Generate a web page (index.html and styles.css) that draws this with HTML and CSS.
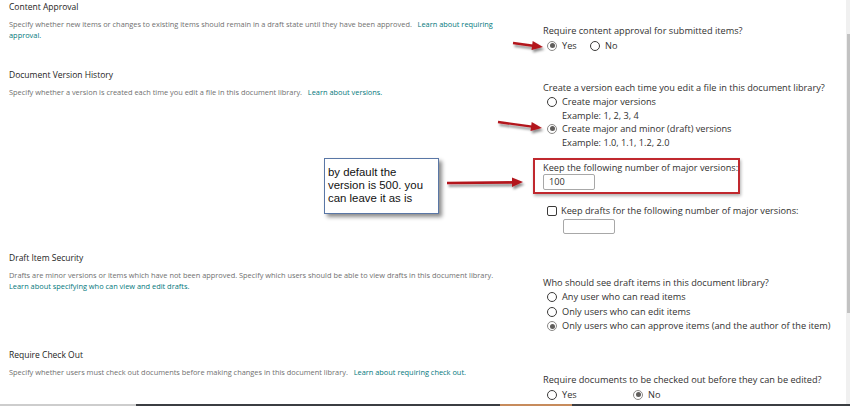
FILE: index.html
```html
<!DOCTYPE html>
<html lang="en">
<head>
<meta charset="utf-8">
<title>Versioning settings</title>
<link rel="stylesheet" href="styles.css">
</head>
<body>
<div class="window">
  <div class="viewport">
    <main class="content">
      <section class="sec sec-approval">
        <div class="info">
          <h2 class="title">Content Approval</h2>
          <p class="desc">Specify whether new items or changes to existing items should remain in a draft state until they have been approved.&nbsp;&nbsp; <a href="#"><span>Learn about requiring</span> <span>approval.</span></a></p>
        </div>
        <div class="field">
          <div class="q">Require content approval for submitted items?</div>
          <div class="opts inline">
            <div class="opt"><span class="radio on"></span>Yes</div>
            <div class="opt"><span class="radio"></span>No</div>
          </div>
        </div>
      </section>

      <section class="sec sec-versions">
        <div class="info">
          <h2 class="title">Document Version History</h2>
          <p class="desc">Specify whether a version is created each time you edit a file in this document library.&nbsp;&nbsp; <a href="#">Learn about versions.</a></p>
        </div>
        <div class="field">
          <div class="q">Create a version each time you edit a file in this document library?</div>
          <div class="opts list">
            <div class="opt"><span class="radio"></span>Create major versions</div>
            <div class="example">Example: 1, 2, 3, 4</div>
            <div class="opt"><span class="radio on"></span>Create major and minor (draft) versions</div>
            <div class="example">Example: 1.0, 1.1, 1.2, 2.0</div>
          </div>
          <div class="keep">
            <div class="keep-label">Keep the following number of major versions:</div>
            <div class="textbox">100</div>
          </div>
          <div class="check-row"><span class="checkbox"></span>Keep drafts for the following number of major versions:</div>
          <div class="textbox indent"></div>
        </div>
      </section>

      <section class="sec sec-drafts">
        <div class="info">
          <h2 class="title">Draft Item Security</h2>
          <p class="desc"><span>Drafts are minor versions or items which have not been approved. Specify which users should be able to view drafts in this document library.</span> <a href="#">Learn about specifying who can view and edit drafts.</a></p>
        </div>
        <div class="field">
          <div class="q">Who should see draft items in this document library?</div>
          <div class="opts tall">
            <div class="opt"><span class="radio"></span>Any user who can read items</div>
            <div class="opt"><span class="radio"></span>Only users who can edit items</div>
            <div class="opt"><span class="radio on"></span>Only users who can approve items (and the author of the item)</div>
          </div>
        </div>
      </section>

      <section class="sec sec-checkout">
        <div class="info">
          <h2 class="title">Require Check Out</h2>
          <p class="desc">Specify whether users must check out documents before making changes in this document library.&nbsp;&nbsp; <a href="#">Learn about requiring check out.</a></p>
        </div>
        <div class="field">
          <div class="q">Require documents to be checked out before they can be edited?</div>
          <div class="opts inline wide">
            <div class="opt"><span class="radio"></span>Yes</div>
            <div class="opt"><span class="radio on"></span>No</div>
          </div>
        </div>
      </section>

      <div class="highlight"></div>
      <div class="callout">by default the version is 500. you can leave it as is</div>

      <svg class="arrows" width="846" height="404" viewBox="0 0 846 404" xmlns="http://www.w3.org/2000/svg">
        <defs>
          <filter id="shadow" x="-20%" y="-50%" width="140%" height="250%">
            <feDropShadow dx="1.5" dy="2.5" stdDeviation="1.2" flood-color="#000" flood-opacity="0.45"/>
          </filter>
        </defs>
        <g filter="url(#shadow)" fill="#b3161e" stroke="#b3161e">
          <line x1="513" y1="43" x2="533" y2="45.7" stroke-width="2.4"/>
          <polygon points="543,47 532.7,41.1 531.5,50.0" stroke="none"/>
          <line x1="498" y1="122" x2="532" y2="126.6" stroke-width="2.4"/>
          <polygon points="542,128 531.7,122.0 530.5,130.9" stroke="none"/>
          <line x1="447" y1="183" x2="513" y2="182.4" stroke-width="2.6"/>
          <polygon points="523,182 512,177.5 512,187" stroke="none"/>
        </g>
      </svg>
    </main>
    <div class="scrollbar"><div class="thumb"></div></div>
  </div>
  <div class="taskbar">
    <div class="tb-light"></div>
    <div class="tb-dark"></div>
    <div class="tb-orange"></div>
  </div>
</div>
</body>
</html>
```
FILE: styles.css
```css
* { box-sizing: border-box; }
html, body { margin: 0; padding: 0; background: #fff; }
body {
  width: 850px;
  height: 406px;
  overflow: hidden;
  font-family: "Open Sans", "Noto Sans", sans-serif;
  color: #323130;
}
.window { display: flex; flex-direction: column; height: 406px; }
.viewport { flex: 1; display: flex; min-height: 0; }
.content { flex: 1; position: relative; overflow: hidden; }

.scrollbar { width: 4px; background: #f0f0f0; padding-top: 34px; }
.thumb { width: 3px; height: 279px; margin-left: 1px; background: #c2c2c2; }

.taskbar { height: 2px; display: flex; background: #3b3e42; }
.tb-light { width: 136px; background: #cdcdcd; }
.tb-dark { width: 364px; }
.tb-orange { width: 72px; background: #c78b5c; }

/* sections */
.sec { display: grid; grid-template-columns: 534px 1fr; padding-left: 9px; }
.sec-approval { height: 68px; }
.sec-versions { height: 183px; }
.sec-drafts { height: 97px; }
.sec-checkout { height: 56px; }

.info { max-width: 492px; }
.title { margin: 0; font-size: 8.5px; font-weight: 400; line-height: 14px; color: #252423; }
.desc { margin: 4.5px 0 0; font-size: 7.4px; line-height: 11px; color: #707070; }
.desc a { color: #03787c; text-decoration: none; }

.field { font-size: 9.2px; line-height: 14px; color: #323130; white-space: nowrap; }
.sec-approval .field { padding-top: 24px; }
.sec-versions .field { padding-top: 13px; }
.sec-drafts .field { padding-top: 25px; }
.sec-checkout .field { padding-top: 25px; }

.opts { display: flex; flex-direction: column; }
.opts.inline { flex-direction: row; }
.opt { display: flex; align-items: center; height: 15px; }
.inline .opt:first-child { width: 43px; }
.wide .opt:first-child { width: 86px; }
.list .opt, .list .example { height: 13.5px; line-height: 13.5px; }
.example { padding-left: 19px; }
.tall .opt { height: 14.5px; }

.radio {
  flex: none;
  width: 10px; height: 10px;
  margin: 0 5px 0 4px;
  border: 1px solid #3b3a39;
  border-radius: 50%;
  background: #fff;
  display: flex; align-items: center; justify-content: center;
}
.radio.on { border-color: #8a8886; }
.radio.on::after { content: ""; width: 5px; height: 5px; border-radius: 50%; background: #605e5c; }

.keep { margin-top: 11.5px; }
.keep-label { line-height: 13px; }
.textbox {
  width: 52px; height: 16px;
  border: 1px solid #a8a8a8;
  border-radius: 2px;
  padding-left: 5px;
  line-height: 14px;
  background: #fff;
}
.textbox.indent { margin-left: 20px; margin-top: 1px; height: 15px; }

.check-row { display: flex; align-items: center; height: 14px; margin-top: 14px; }
.checkbox {
  flex: none;
  width: 10px; height: 10px;
  margin: 0 4px 0 4px;
  border: 1px solid #3b3a39;
  border-radius: 2px;
}

/* annotations */
.highlight {
  position: absolute;
  left: 533px; top: 158px;
  width: 207px; height: 36px;
  border: 2px solid #c0282e;
  box-shadow: 1px 2px 3px rgba(0,0,0,0.3);
}
.callout {
  position: absolute;
  left: 324px; top: 158px;
  width: 115px; height: 56px;
  padding: 6.5px 3px 0 3px;
  border: 1px solid #5a77a6;
  background: #fff;
  box-shadow: 3px 3px 4px rgba(0,0,0,0.45);
  font-family: "Liberation Sans", Arial, sans-serif;
  font-size: 11.4px;
  line-height: 13px;
  color: #111;
}
.arrows { position: absolute; left: 0; top: 0; pointer-events: none; overflow: visible; }
```
